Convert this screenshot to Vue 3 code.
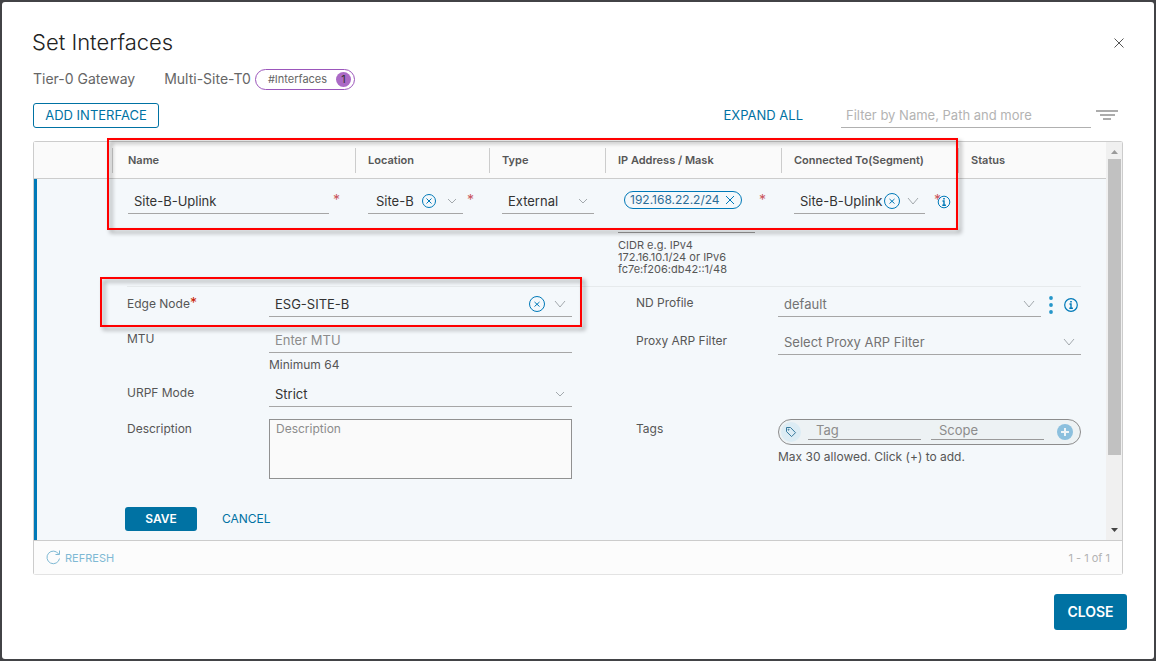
<script setup>
import { ref } from 'vue'

const name = ref('Site-B-Uplink')
const mtu = ref('')
const description = ref('')
const filter = ref('')
const tag = ref('')
const scope = ref('')
</script>

<template>
  <main class="dialog" role="dialog" aria-labelledby="title">
    <header class="head">
      <h1 id="title">Set Interfaces</h1>
      <button class="icon-btn" aria-label="Close dialog">
        <svg width="12" height="12" viewBox="0 0 12 12"><path d="M1.5 1.5l9 9M10.5 1.5l-9 9" stroke="#565656" fill="none" /></svg>
      </button>
    </header>

    <div class="context">
      <span>Tier-0 Gateway</span>
      <span class="gateway">Multi-Site-T0</span>
      <span class="badge">#Interfaces <b>1</b></span>
    </div>

    <div class="toolbar">
      <button class="btn outline">ADD INTERFACE</button>
      <button class="link expand">EXPAND ALL</button>
      <input v-model="filter" class="filter" type="text" aria-label="Filter" placeholder="Filter by Name, Path and more" />
      <button class="icon-btn" aria-label="Filter options">
        <svg width="22" height="12" viewBox="0 0 22 12"><path d="M0 2h22M4 6h15M7 10h8" stroke="#acacac" stroke-width="2" /></svg>
      </button>
    </div>

    <section class="panel">
      <div class="viewport">
        <table>
          <colgroup>
            <col class="c-menu" /><col /><col class="c-loc" /><col class="c-type" /><col class="c-ip" /><col class="c-seg" /><col class="c-status" />
          </colgroup>
          <thead>
            <tr>
              <th></th>
              <th id="h-name"><span>Name</span></th>
              <th id="h-loc"><span>Location</span></th>
              <th id="h-type"><span>Type</span></th>
              <th id="h-ip"><span>IP Address / Mask</span></th>
              <th id="h-seg"><span>Connected To(Segment)</span></th>
              <th><span>Status</span></th>
            </tr>
          </thead>
          <tbody>
            <tr class="row">
              <td></td>
              <td>
                <div class="cell">
                  <div class="control name"><input v-model="name" type="text" aria-labelledby="h-name" /></div>
                  <span class="req">*</span>
                </div>
              </td>
              <td>
                <div class="cell">
                  <div class="control loc">
                    <select aria-labelledby="h-loc"><option>Site-B</option></select>
                    <button class="icon-btn" aria-label="Clear location">
                      <svg width="16" height="16" viewBox="0 0 16 16" fill="none" stroke="#0079b8"><circle cx="8" cy="8" r="6.5" /><path d="M5.5 5.5l5 5M10.5 5.5l-5 5" /></svg>
                    </button>
                    <svg class="chev" width="14" height="10" viewBox="0 0 14 10"><path d="M3 3l4 4 4-4" /></svg>
                  </div>
                  <span class="req">*</span>
                </div>
              </td>
              <td>
                <div class="cell">
                  <div class="control type">
                    <select aria-labelledby="h-type"><option>External</option></select>
                    <svg class="chev" width="14" height="10" viewBox="0 0 14 10"><path d="M3 3l4 4 4-4" /></svg>
                  </div>
                </div>
              </td>
              <td>
                <div class="cell">
                  <div class="address">
                    <span class="chip">192.168.22.2/24
                      <button class="icon-btn" aria-label="Remove address">
                        <svg width="10" height="10" viewBox="0 0 10 10"><path d="M1 1l8 8M9 1L1 9" stroke="#0079b8" /></svg>
                      </button>
                    </span>
                    <p>CIDR e.g. IPv4<br />172.16.10.1/24 or IPv6<br />fc7e:f206:db42::1/48</p>
                  </div>
                  <span class="req">*</span>
                </div>
              </td>
              <td>
                <div class="cell seg-cell">
                  <div class="control seg">
                    <select aria-labelledby="h-seg"><option>Site-B-Uplink</option></select>
                    <button class="icon-btn" aria-label="Clear segment">
                      <svg width="16" height="16" viewBox="0 0 16 16" fill="none" stroke="#0079b8"><circle cx="8" cy="8" r="7.5" /><path d="M5.5 6l5 4.500M10.500 6l-5 4.500" /></svg>
                    </button>
                    <svg class="chev" width="14" height="10" viewBox="0 0 14 10"><path d="M2 2l5 6 5-6" /></svg>
                  </div>
                  <span class="req">*</span>
                  <button class="icon-btn info" aria-label="Segment information">
                    <svg width="14" height="14" viewBox="0 0 14 14" fill="none" stroke="#0079b8"><circle cx="7" cy="7" r="5.8" /><path d="M5.5 6H7v4M5.3 10.2h3.6M6.2 3.8h1.6" stroke-width="1.4" /></svg>
                  </button>
                </div>
              </td>
              <td></td>
            </tr>
            <tr class="details">
              <td colspan="7">
                <div class="form">
                  <div class="side">
                    <div class="field">
                      <label for="edge">Edge Node<i>*</i></label>
                      <div class="control">
                        <select id="edge"><option>ESG-SITE-B</option></select>
                        <button class="icon-btn" aria-label="Clear edge node">
                          <svg width="16" height="16" viewBox="0 0 16 16" fill="none" stroke="#0079b8"><circle cx="8" cy="8" r="7.5" /><path d="M5.5 6l5 4.500M10.500 6l-5 4.500" /></svg>
                        </button>
                        <svg class="chev" width="14" height="10" viewBox="0 0 14 10"><path d="M2 2l5 6 5-6" /></svg>
                      </div>
                    </div>
                    <div class="field">
                      <label for="mtu">MTU</label>
                      <div>
                        <div class="control"><input id="mtu" v-model="mtu" type="text" placeholder="Enter MTU" /></div>
                        <p class="hint">Minimum 64</p>
                      </div>
                    </div>
                    <div class="field">
                      <label for="urpf">URPF Mode</label>
                      <div class="control">
                        <select id="urpf"><option>Strict</option></select>
                        <svg class="chev" width="14" height="10" viewBox="0 0 14 10"><path d="M3 3l4 4 4-4" /></svg>
                      </div>
                    </div>
                    <div class="field">
                      <label for="desc">Description</label>
                      <textarea id="desc" v-model="description" placeholder="Description"></textarea>
                    </div>
                  </div>

                  <div class="side right">
                    <div class="field">
                      <label for="nd">ND Profile</label>
                      <div class="with-actions">
                        <div class="control muted">
                          <select id="nd"><option>default</option></select>
                          <svg class="chev" width="14" height="10" viewBox="0 0 14 10"><path d="M2 2l5 6 5-6" /></svg>
                        </div>
                        <button class="icon-btn dots" aria-label="Profile actions">
                          <svg width="4" height="20" viewBox="0 0 4 20" fill="#2596c9"><circle cx="2" cy="3" r="1.9" /><circle cx="2" cy="10" r="1.9" /><circle cx="2" cy="17" r="1.9" /></svg>
                        </button>
                        <button class="icon-btn" aria-label="Profile information">
                          <svg width="14" height="14" viewBox="0 0 14 14" fill="none" stroke="#0079b8"><circle cx="7" cy="7" r="6.3" stroke-width="1.2" /><path d="M5.5 6H7v4M5.3 10.2h3.6M6.2 3.8h1.6" stroke-width="1.4" /></svg>
                        </button>
                      </div>
                    </div>
                    <div class="field">
                      <label for="arp">Proxy ARP Filter</label>
                      <div class="control muted">
                        <select id="arp"><option>Select Proxy ARP Filter</option></select>
                        <svg class="chev" width="14" height="10" viewBox="0 0 14 10"><path d="M2 2l5 6 5-6" /></svg>
                      </div>
                    </div>
                    <div class="field tags">
                      <label for="tag">Tags</label>
                      <div>
                        <div class="tagbox">
                          <span class="tagicon">
                            <svg width="12" height="12" viewBox="0 0 12 12" fill="none" stroke="#35789c"><path d="M1.5 1.5h4l5 5.2-3.9 3.9-5.1-5z" stroke-linejoin="round" /><circle cx="3.6" cy="3.7" r=".5" /></svg>
                          </span>
                          <input id="tag" v-model="tag" type="text" placeholder="Tag" />
                          <input v-model="scope" type="text" placeholder="Scope" aria-label="Scope" />
                          <button class="icon-btn" aria-label="Add tag">
                            <svg width="16" height="16" viewBox="0 0 16 16"><circle cx="8" cy="8" r="8" fill="#8cc0de" /><path d="M8 4v8M4 8h8" stroke="#eef4f7" stroke-width="2" /></svg>
                          </button>
                        </div>
                        <p class="hint">Max 30 allowed. Click (+) to add.</p>
                      </div>
                    </div>
                  </div>
                </div>
                <div class="actions">
                  <button class="btn save">SAVE</button>
                  <button class="link cancel">CANCEL</button>
                </div>
              </td>
            </tr>
          </tbody>
        </table>
        <div class="scrollbar">
          <svg width="9" height="5" viewBox="0 0 9 5"><path d="M1 5l3.500-4L8 5z" fill="#9a9a9a" /></svg>
          <div class="track"><div class="thumb"></div></div>
          <svg width="9" height="5" viewBox="0 0 9 5"><path d="M1 0l3.500 4L8 0z" fill="#444" /></svg>
        </div>
      </div>
      <footer class="foot">
        <button class="refresh">
          <svg width="15" height="15" viewBox="0 0 15 15" fill="none" stroke="#7fb9d4"><path d="M13.500 8.500A6.300 6.300 0 1 1 12.600 4M13.500.5v4h-4" /></svg>
          REFRESH
        </button>
        <span>1 - 1 of 1</span>
      </footer>
      <div class="mark mark-row"></div>
      <div class="mark mark-edge"></div>
    </section>

    <div class="bottom"><button class="btn close">CLOSE</button></div>
  </main>
</template>

<style>
body {
  background: #424346;
}
</style>

<style scoped>
* {
  box-sizing: border-box;
}
.dialog {
  margin: 2px 2px 0;
  min-height: calc(100vh - 4px);
  padding: 24px 27px 28px 30px;
  background: #fff;
  border-radius: 3px;
  font: 13px/18px Inter, "Noto Sans", sans-serif;
  color: #565656;
}
button,
input,
select,
textarea {
  font: inherit;
  color: inherit;
  margin: 0;
}
button {
  border: 0;
  padding: 0;
  background: none;
  cursor: pointer;
}
svg {
  display: block;
}
h1,
p {
  margin: 0;
}
.head {
  display: flex;
  justify-content: space-between;
  align-items: center;
  height: 34px;
  padding-right: 2px;
}
h1 {
  font-size: 22px;
  font-weight: 300;
  color: #222;
  line-height: 32px;
  height: 34px;
}
.context {
  display: flex;
  align-items: center;
  height: 22px;
  margin: 8px 0 0 1px;
  font-size: 14px;
  color: #666;
}
.gateway {
  margin-left: 29px;
}
.badge {
  display: flex;
  align-items: center;
  gap: 9px;
  height: 21px;
  margin-left: 4px;
  padding: 0 3px 0 12px;
  border: 1px solid #9b56bb;
  border-radius: 11px;
  font-size: 11px;
}
.badge b {
  width: 15px;
  height: 15px;
  border-radius: 50%;
  background: #ab6ac6;
  color: #333;
  font-weight: 400;
  line-height: 15px;
  text-align: center;
}
.toolbar {
  display: flex;
  align-items: center;
  height: 26px;
  margin: 12px 9px 13px 1px;
}
.btn {
  border-radius: 3px;
  background: #0072a3;
  color: #fff;
  font-weight: 600;
}
.outline {
  width: 126px;
  height: 25px;
  border: 1px solid #0072a3;
  background: #fff;
  color: #0072a3;
  font-weight: 400;
}
.link {
  color: #0072a3;
}
.expand {
  margin-left: auto;
  margin-right: 38px;
}
.filter {
  width: 250px;
  height: 26px;
  margin-right: 5px;
  padding: 0 5px;
  border: 0;
  border-bottom: 1px solid #b0b0b0;
  background: none;
}
::placeholder {
  color: #8c8c8c;
  opacity: 1;
}
.filter::placeholder {
  color: #b3b3b3;
}
.panel {
  position: relative;
  margin: 0 4px 0 1px;
  border: 1px solid #ccc;
  border-bottom-color: #e3e3e3;
  border-radius: 3px;
}
.viewport {
  display: flex;
  border-bottom: 1px solid #ccc;
  background: #f4f8fb;
}
table {
  flex: 1;
  width: 100%;
  table-layout: fixed;
  border-collapse: separate;
  border-spacing: 0;
}
.c-menu { width: 78px; }
.c-loc { width: 134px; }
.c-type { width: 116px; }
.c-ip { width: 176px; }
.c-seg { width: 177px; }
.c-status { width: 148px; }
th {
  height: 37px;
  padding: 0;
  background: #fafafa;
  border-bottom: 1px solid #ccc;
  font-size: 11px;
  font-weight: 600;
  text-align: left;
}
th span {
  display: block;
  height: 25px;
  padding-left: 12px;
  border-left: 1px solid #ccc;
  line-height: 25px;
  white-space: nowrap;
}
th:nth-child(2) span {
  padding-left: 15px;
}
td {
  padding: 0 0 0 13px;
  vertical-align: top;
}
td:nth-child(2) {
  padding-left: 16px;
}
td:first-child {
  box-shadow: inset 3px 0 #0079b8;
}
.row td {
  height: 107px;
}
.cell {
  display: flex;
  padding-top: 11px;
}
.control {
  display: flex;
  align-items: center;
  height: 24px;
  min-width: 0;
  padding-bottom: 2px;
  border-bottom: 1px solid #a6a6a6;
  color: #333;
}
.control input,
.control select {
  flex: 1;
  width: 0;
  min-width: 0;
  height: 20px;
  padding: 0 0 0 6px;
  border: 0;
  outline: 0;
  background: none;
  appearance: none;
}
.icon-btn {
  flex: none;
}
.chev {
  flex: none;
  margin: 0 5px 0 8px;
  fill: none;
  stroke: #a3a9ad;
}
.name { width: 201px; }
.loc { width: 95px; }
.type { width: 92px; }
.seg { width: 131px; }
.loc .chev,
.type .chev {
  margin-right: 4px;
}
.loc select {
  padding-left: 8px;
}
.req {
  margin-left: 4px;
  color: #c9555c;
  font-size: 14px;
  line-height: 20px;
}
.address {
  width: 137px;
}
.chip {
  display: inline-flex;
  align-items: center;
  gap: 5px;
  height: 18px;
  margin: 1px 0 0 6px;
  padding: 0 6px 0 5px;
  border: 1px solid #0079b8;
  border-radius: 9px;
  color: #2b6d97;
  font-size: 12px;
  white-space: nowrap;
}
.address p {
  margin-top: 23px;
  padding-top: 6px;
  border-top: 1px solid #9a9a9a;
  font-size: 11px;
  line-height: 12px;
  white-space: nowrap;
}
.seg .chev {
  margin: 0 5px 0 6px;
}
.seg-cell .req {
  margin-left: 9px;
}
.info {
  align-self: flex-start;
  margin: 5px 0 0 -4px;
}
.form {
  display: grid;
  grid-template-columns: 1fr 1fr;
  gap: 64px;
  margin: 0 25px 0 80px;
  padding-top: 6px;
  border-top: 1px solid #e6eaec;
}
.side {
  display: flex;
  flex-direction: column;
  gap: 12px;
}
.right {
  gap: 14px;
}
.field {
  display: grid;
  grid-template-columns: 142px 1fr;
  align-items: start;
}
label {
  padding-top: 1px;
  font-size: 12px;
}
label i {
  color: #c92100;
  font-style: normal;
  font-size: 14px;
}
.muted {
  flex: 1;
  color: #737373;
}
.with-actions {
  display: flex;
  align-items: center;
  gap: 8px;
  padding-right: 3px;
}
.dots {
  margin-right: 3px;
}
.hint {
  margin-top: 6px;
  font-size: 12px;
  line-height: 12px;
}
textarea {
  width: 100%;
  height: 60px;
  padding: 0 6px;
  border: 1px solid #919191;
  background: #fafafa;
  font-size: 12px;
  resize: none;
}
.tags {
  margin-top: 50px;
}
.tagbox {
  display: flex;
  align-items: center;
  gap: 10px;
  height: 26px;
  padding: 0 7px 0 2px;
  border: 1px solid #8c8c8c;
  border-radius: 13px;
  background: #edf2f4;
}
.tagicon {
  display: grid;
  place-items: center;
  flex: none;
  width: 20px;
  height: 20px;
  margin-right: -3px;
  border-radius: 50%;
  background: #dcecf4;
}
.tagbox input {
  flex: 1;
  width: 0;
  height: 20px;
  margin-bottom: 4px;
  padding: 0 8px;
  border: 0;
  border-bottom: 1px solid #9a9a9a;
  background: none;
}
.tagbox .icon-btn {
  margin-left: 3px;
}
.actions {
  display: flex;
  align-items: center;
  gap: 25px;
  margin: 28px 0 9px 78px;
}
.save {
  width: 72px;
  height: 24px;
  font-size: 12px;
}
.cancel {
  font-size: 12px;
}
.scrollbar {
  display: flex;
  flex-direction: column;
  align-items: center;
  width: 16px;
  padding: 7px 0;
  background: #f0f0f0;
}
.track {
  flex: 1;
  width: 13px;
  margin: 5px 0 12px;
}
.thumb {
  height: 83%;
  background: #c1c1c1;
}
.foot {
  display: flex;
  justify-content: space-between;
  align-items: center;
  height: 33px;
  padding: 0 12px;
  background: #fcfcfc;
  color: #b3b3b3;
  font-size: 11px;
}
.refresh {
  display: flex;
  align-items: center;
  gap: 4px;
  color: #7fb9d4;
}
.mark {
  position: absolute;
  border: 2px solid #f00;
  filter: drop-shadow(3px 3px 2px rgba(0, 0, 0, 0.4));
  pointer-events: none;
}
.mark-row {
  top: -4px;
  left: 73px;
  right: 164px;
  height: 92px;
}
.mark-edge {
  top: 135px;
  left: 66px;
  width: 482px;
  height: 50px;
}
.bottom {
  display: flex;
  justify-content: flex-end;
  margin-top: 19px;
}
.close {
  width: 73px;
  height: 36px;
  font-size: 14px;
}
</style>
